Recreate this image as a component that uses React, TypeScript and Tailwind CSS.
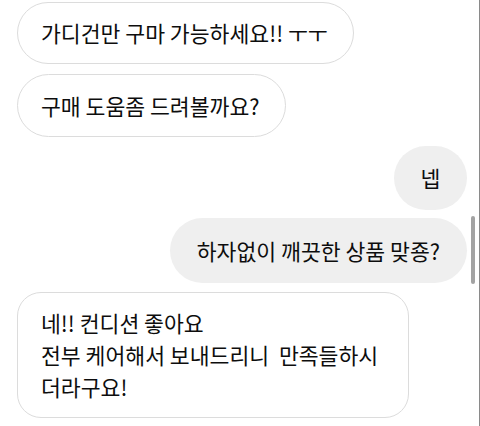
import React from "react";

const font = { fontFamily: '"Noto Sans CJK KR", "Noto Sans", sans-serif' };

export default function App() {
  return (
    <div
      className="relative w-[480px] h-[426px] bg-white border-r border-[#8a8a8a] overflow-hidden text-[21.6px] leading-[32px] text-[#0d0d0d]"
      style={font}
    >
      <div className="flex flex-col pl-[17px] pr-[12px] pt-[2px]">
        <div className="self-start h-[62px] flex items-center pl-[23px] pr-[25px] rounded-full border-[1.5px] border-[#dcdcdc] bg-white">
          가디건만 구마 가능하세요!! ㅜㅜ
        </div>
        <div className="self-start mt-[10px] h-[63px] flex items-center pl-[23px] pr-[25px] rounded-full border-[1.5px] border-[#dcdcdc] bg-white">
          구매 도움좀 드려볼까요?
        </div>
        <div className="self-end mt-[9px] h-[64px] w-[73px] flex items-center justify-center rounded-full bg-[#efefef]">
          넵
        </div>
        <div className="self-end mt-[8px] h-[65px] flex items-center pl-[27px] pr-[27px] rounded-full bg-[#efefef]">
          하자없이 깨끗한 상품 맞죵?
        </div>
        <div className="self-start mt-[9px] w-[392px] h-[126px] flex flex-col justify-center pl-[23px] pr-[10px] rounded-[24px] border-[1.5px] border-[#dcdcdc] bg-white whitespace-pre">
          <div>네!! 컨디션 좋아요</div>
          <div>전부 케어해서 보내드리니  만족들하시</div>
          <div>더라구요!</div>
        </div>
      </div>
      <div className="absolute left-[471px] top-[216px] w-[4px] h-[68px] rounded-full bg-[#a3a3a3]" />
    </div>
  );
}
